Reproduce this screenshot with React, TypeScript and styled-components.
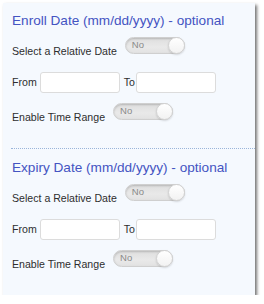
import styled, { createGlobalStyle } from 'styled-components'

const GlobalStyle = createGlobalStyle`
  html, body {
    margin: 0;
    padding: 0;
    background: #fff;
  }
  * {
    box-sizing: border-box;
  }
`

interface DateFilterProps {
  title: string;
  first?: boolean;
}

const Toggle = ({ label }: { label: string }) => (
  <Track>
    <TrackText>{label}</TrackText>
    <Knob />
  </Track>
)

const DateFilter = ({ title, first }: DateFilterProps) => (
  <Section first={first}>
    <Title>{title}</Title>
    <ToggleRow>
      <Label>Select a Relative Date</Label>
      <Toggle label="No" />
    </ToggleRow>
    <RangeRow>
      <RangeLabel>From</RangeLabel>
      <DateInput type="text" />
      <RangeLabel to>To</RangeLabel>
      <DateInput type="text" />
    </RangeRow>
    <ToggleRow spaced>
      <Label>Enable Time Range</Label>
      <Toggle label="No" />
    </ToggleRow>
  </Section>
)

const App = () => {
  return (
    <>
      <GlobalStyle />
      <Card>
        <DateFilter title="Enroll Date (mm/dd/yyyy) - optional" first />
        <Divider />
        <DateFilter title="Expiry Date (mm/dd/yyyy) - optional" />
      </Card>
    </>
  )
}

const Card = styled.div`
  margin: 3px 0 0 3px;
  width: 252px;
  background: #f5f9fe;
  padding-left: 9px;
  box-shadow: 2px 2px 3px rgba(0, 0, 0, 0.55);
  font-family: 'Liberation Sans', Arial, sans-serif;
  color: #2e2e2e;
  display: flex;
  flex-direction: column;
`

const Section = styled.div<{ first?: boolean }>`
  display: flex;
  flex-direction: column;
  padding-top: ${(p) => (p.first ? '10px' : '11px')};
  padding-bottom: 24px;
`

const Divider = styled.div`
  height: 0;
  margin-left: -1px;
  border-top: 1px dotted #9ab5da;
`

const Title = styled.div`
  font-size: 13.6px;
  line-height: 16px;
  color: #4454c2;
  white-space: nowrap;
`

const ToggleRow = styled.div<{ spaced?: boolean }>`
  display: flex;
  align-items: flex-start;
  gap: 8px;
  height: 21px;
  margin-top: ${(p) => (p.spaced ? '10px' : '8px')};
`

const Label = styled.span`
  font-size: 10.6px;
  line-height: 13px;
  margin-top: 7.5px;
  white-space: nowrap;
`

const Track = styled.div`
  display: flex;
  align-items: flex-start;
  width: 60px;
  height: 17px;
  border: 1px solid #cfcfcf;
  border-radius: 9px;
  background: linear-gradient(to bottom, #dedede, #e9e9e9 60%, #e2e2e2);
  box-shadow: inset 0 1px 2px rgba(0, 0, 0, 0.18);
`

const TrackText = styled.span`
  font-size: 9.5px;
  line-height: 10px;
  color: #8a8a8a;
  padding: 2px 0 0 6px;
`

const Knob = styled.span`
  width: 17px;
  height: 17px;
  margin: -1px -1px -1px auto;
  border-radius: 50%;
  border: 1px solid #d2d2d2;
  background: linear-gradient(to bottom, #ffffff, #f2f2f2);
  box-shadow: 0 1px 2px rgba(0, 0, 0, 0.15);
`

const RangeRow = styled.div`
  display: flex;
  align-items: center;
  margin-top: 14px;
  height: 21px;
`

const RangeLabel = styled.span<{ to?: boolean }>`
  font-size: 10.6px;
  line-height: 13px;
  margin: ${(p) => (p.to ? '0 1.5px 0 4px' : '0 3px 0 0')};
`

const DateInput = styled.input`
  width: 80px;
  height: 21px;
  border: 1px solid #dcdcdc;
  border-radius: 3px;
  background: #fff;
  padding: 0 4px;
  outline: none;
`

export default App
